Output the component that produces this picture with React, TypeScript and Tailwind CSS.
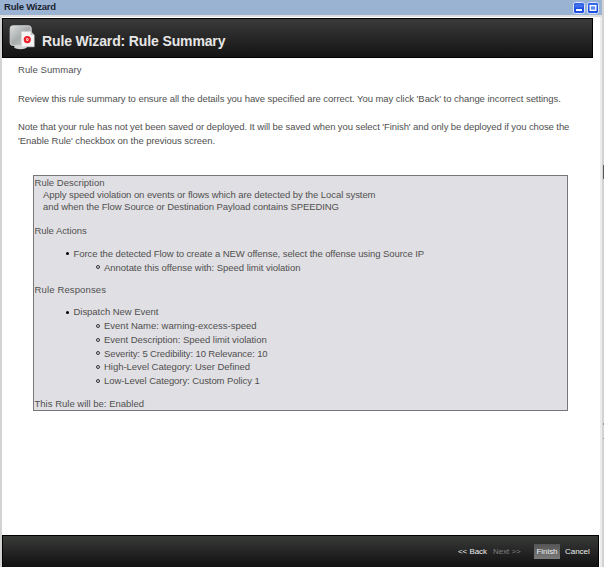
import React from "react";

type ItemProps = { children: React.ReactNode; className?: string };

function Bullet({ children, className = "" }: ItemProps) {
  return (
    <div className={`ml-[32px] flex items-center whitespace-nowrap ${className}`}>
      <span className="mr-[4.5px] h-[3px] w-[3px] rounded-full bg-black" />
      {children}
    </div>
  );
}

function SubBullet({ children, className = "tracking-[0px]" }: ItemProps) {
  return (
    <div className={`ml-[62px] flex items-center whitespace-nowrap ${className}`}>
      <span className="mr-[4px] h-[4px] w-[4px] rounded-full border border-[#333]" />
      {children}
    </div>
  );
}

function RuleIcon() {
  return (
    <svg width="27" height="26" viewBox="0 0 27 26" className="shrink-0">
      <defs>
        <linearGradient id="screen" x1="0" y1="0" x2="1" y2="1">
          <stop offset="0" stopColor="#dcdede" />
          <stop offset="0.5" stopColor="#a9adad" />
          <stop offset="1" stopColor="#c8caca" />
        </linearGradient>
      </defs>
      <ellipse cx="11.5" cy="22" rx="6.5" ry="2.2" fill="#d3d5d5" />
      <rect x="1.2" y="0.8" width="21" height="19.6" rx="2.5" fill="url(#screen)" stroke="#d2d4d4" strokeWidth="1" />
      <path d="M12.3 6.5h9.4l3.5 3.5v11.8H12.3z" fill="#f5f5f5" stroke="#cfcfcf" strokeWidth="0.6" />
      <path d="M21.7 6.5v3.5h3.5z" fill="#bfc2c2" />
      <circle cx="18.3" cy="14.6" r="2.5" fill="#fff" stroke="#f0202a" strokeWidth="2.2" />
      <circle cx="18.3" cy="14.6" r="0.6" fill="#f0202a" />
    </svg>
  );
}

function WindowButton({ kind }: { kind: "min" | "max" }) {
  return (
    <svg width="12" height="12" viewBox="0 0 12 12">
      <rect x="0.5" y="0.5" width="11" height="11" rx="2" fill="#1f4fe0" stroke="#dbe6fb" />
      <rect x="1.5" y="1.5" width="9" height="4" rx="1" fill="#3f70ea" />
      {kind === "min" ? (
        <rect x="3" y="7" width="6" height="2" fill="#fff" />
      ) : (
        <rect x="3.2" y="3.7" width="5.6" height="4.6" fill="#5c8bee" stroke="#fff" strokeWidth="1.3" />
      )}
    </svg>
  );
}

export default function App() {
  return (
    <div className="flex h-[567px] w-[604px] overflow-hidden bg-[#d3d3d3] font-['Liberation_Sans',Arial,sans-serif] text-[9.5px] tracking-[-0.055px] text-[#505050]">
      <div className="flex w-[602px] shrink-0 flex-col">
        <div className="flex h-[15px] items-center justify-between bg-[#9ab3d3] pl-[4px] pr-[3px]">
          <span className="text-[9.5px] font-bold tracking-[-0.22px] text-[#1c2430]">Rule Wizard</span>
          <span className="flex gap-[2px]">
            <WindowButton kind="min" />
            <WindowButton kind="max" />
          </span>
        </div>
        <div className="h-[2px] bg-[#dedede]" />
        <div className="ml-[2px] flex h-[550px] w-[600px] flex-col border-r-2 border-[#ececec] bg-white">
          <header className="mt-px flex h-[40px] w-[591px] items-center border border-black bg-gradient-to-b from-[#3b3b3b] to-[#141414] pl-[6px]">
            <RuleIcon />
            <h1 className="ml-[6px] mt-[6px] whitespace-nowrap text-[14px] font-bold leading-[18px] tracking-[-0.13px] text-[#e6e6e6]">
              Rule Wizard: Rule Summary
            </h1>
          </header>
          <main className="h-[477px] pl-[16px] pt-[5px] leading-[14px]">
            <p className="tracking-[0.07px]">Rule Summary</p>
            <p className="mt-[15px] whitespace-nowrap">
              <span>Review this rule summary to ensure all the details you have specified are correct. You may click 'Back' to change incorrect settings.</span>
            </p>
            <p className="mt-[14px] whitespace-nowrap leading-[13.5px]">
              <span className="tracking-[-0.09px]">Note that your rule has not yet been saved or deployed. It will be saved when you select 'Finish' and only be deployed if you chose the</span>
              <br />
              <span>'Enable Rule' checkbox on the previous screen.</span>
            </p>
            <section className="ml-[15px] mt-[28px] h-[236px] w-[535px] border border-[#777] bg-[#e0dfe3] leading-[13.8px]">
              <div className="h-[13px] pl-[0.5px] tracking-[0.02px]">Rule Description</div>
              <div className="h-[12px] pl-[9px] leading-[12px] tracking-[-0.07px]">Apply speed violation on events or flows which are detected by the Local system</div>
              <div className="h-[12px] pl-[9px] leading-[12px] tracking-[-0.07px]">and when the Flow Source or Destination Payload contains SPEEDING</div>
              <div className="mt-[11px] pl-[0.5px]">Rule Actions</div>
              <Bullet className="mt-[9px] tracking-[-0.08px]">Force the detected Flow to create a NEW offense, select the offense using Source IP</Bullet>
              <SubBullet className="tracking-[-0.04px]">Annotate this offense with: Speed limit violation</SubBullet>
              <div className="mt-[9px] pl-[0.5px] tracking-[0.14px]">Rule Responses</div>
              <Bullet className="mt-[8px] tracking-[-0.04px]">Dispatch New Event</Bullet>
              <SubBullet>Event Name: warning-excess-speed</SubBullet>
              <SubBullet className="tracking-[-0.04px]">Event Description: Speed limit violation</SubBullet>
              <SubBullet className="tracking-[-0.12px]">Severity: 5 Credibility: 10 Relevance: 10</SubBullet>
              <SubBullet className="tracking-[-0.04px]">High-Level Category: User Defined</SubBullet>
              <SubBullet className="tracking-[-0.08px]">Low-Level Category: Custom Policy 1</SubBullet>
              <div className="mt-[9px] pl-[0.5px] tracking-[0.01px]">This Rule will be: Enabled</div>
            </section>
          </main>
          <footer className="flex h-[32px] w-[597px] items-center border-x border-t border-black bg-gradient-to-b from-[#393b39] to-[#111] pl-[455px] text-[8px] tracking-[-0.05px] text-[#eee]">
            <span className="w-[35px] whitespace-nowrap">&lt;&lt; Back</span>
            <span className="w-[41px] whitespace-nowrap text-[#808080]">Next &gt;&gt;</span>
            <span className="flex h-[15px] w-[26px] items-center justify-center bg-gradient-to-b from-[#555] to-[#7a7a7a]">Finish</span>
            <span className="ml-[5px]">Cancel</span>
          </footer>
        </div>
      </div>
      <div className="flex w-[2px] flex-col items-end">
        <div className="mt-[165px] h-[14px] w-px bg-[#555]" />
        <div className="mt-[244px] h-[2px] w-px bg-[#999]" />
        <div className="mt-[13px] h-px w-px bg-[#999]" />
      </div>
    </div>
  );
}
